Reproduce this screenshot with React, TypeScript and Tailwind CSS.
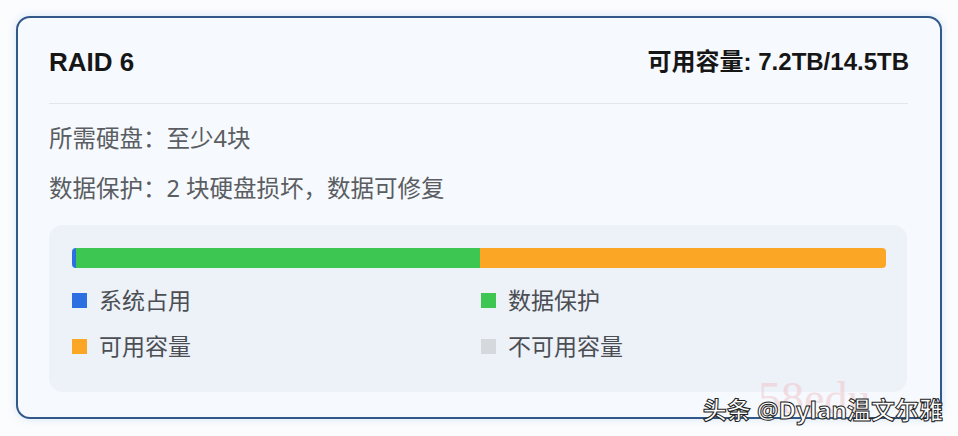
import React from 'react';

const legend = [
  { label: '系统占用', color: 'bg-[#2b6fe0]' },
  { label: '数据保护', color: 'bg-[#3ec653]' },
  { label: '可用容量', color: 'bg-[#fba625]' },
  { label: '不可用容量', color: 'bg-[#d5d8dc]' },
];

export default function App() {
  return (
    <div
      className="w-[958px] h-[436px] bg-[#fbfcfe] pt-[16px] pl-[16px] relative overflow-hidden"
      style={{ fontFamily: '"Noto Sans", "Noto Sans CJK SC", sans-serif' }}
    >
      <div className="w-[926px] h-[403px] rounded-[14px] border-2 border-[#30598a] bg-[#f6f9fd] px-[31px] pt-[27px] shadow-[0_0_8px_rgba(180,210,240,0.5)]">
        <div className="flex items-center justify-between h-[34px]">
          <h2 className="text-[26px] font-bold text-[#161616]" style={{ fontFamily: '"Liberation Sans", "Noto Sans CJK SC", sans-serif' }}>
            RAID 6
          </h2>
          <span className="text-[24px] font-bold text-[#161616]" style={{ fontFamily: '"Liberation Sans", "Noto Sans CJK SC", sans-serif' }}>
            可用容量: 7.2TB/14.5TB
          </span>
        </div>
        <div className="h-px bg-[#e3e7ec] mt-[24px] mr-[1px]" />
        <div className="mt-[19px] text-[23.5px] text-[#5a5d62] leading-[30px]">所需硬盘：至少4块</div>
        <div className="mt-[20px] text-[23.5px] text-[#5a5d62] leading-[30px]">数据保护：2 块硬盘损坏，数据可修复</div>
        <div className="mt-[22px] mr-[2px] h-[167px] rounded-[14px] bg-[#edf1f8] px-[23px] pt-[23px]">
          <div className="flex h-[20px] w-[814px] rounded-[4px] overflow-hidden">
            <div className="w-[4px] bg-[#2b6fe0]" />
            <div className="w-[404px] bg-[#3ec653]" />
            <div className="flex-1 bg-[#fba625]" />
          </div>
          <div className="grid grid-cols-[409px_1fr] gap-y-[16px] mt-[17px]">
            {legend.map((item) => (
              <div key={item.label} className="flex items-center gap-[12px] h-[30px]">
                <span className={`w-[15px] h-[15px] ${item.color}`} />
                <span className="text-[23px] text-[#4b4e53]">{item.label}</span>
              </div>
            ))}
          </div>
        </div>
      </div>
      <div className="absolute left-[758px] bottom-[14px] text-[46px] leading-none text-[#efc3c8] opacity-50" style={{ fontFamily: '"Liberation Serif", serif' }}>
        58edu
      </div>
      <div
        className="absolute right-[15px] bottom-[14px] text-[24px] text-white font-bold leading-none"
        style={{ WebkitTextStroke: '1px #222', fontFamily: '"Noto Sans", "Noto Sans CJK SC", sans-serif' }}
      >
        头条 @Dylan温文尔雅
      </div>
    </div>
  );
}
